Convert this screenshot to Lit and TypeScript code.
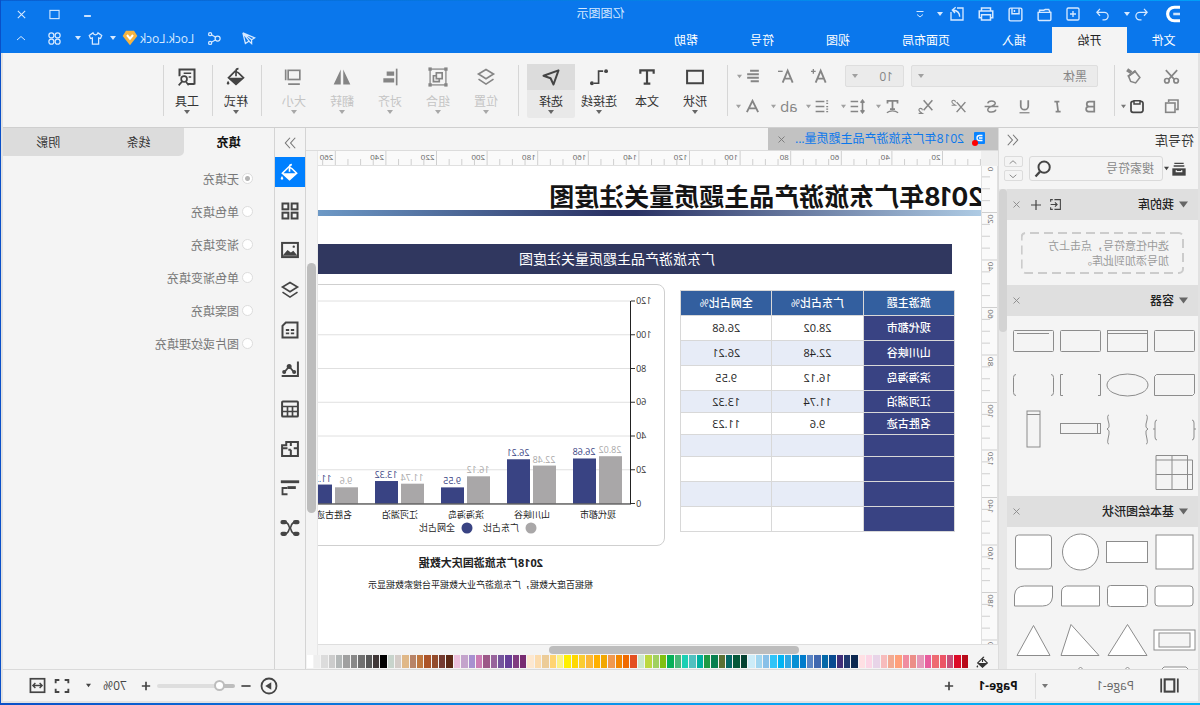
import { LitElement, html, svg, css, nothing } from "lit";
import { customElement, property, state } from "lit/decorators.js";
import { classMap } from "lit/directives/class-map.js";

/* Line icons on a 24-unit grid; drawn with currentColor. */
const ICONS: Record<string, unknown> = {
  logo: svg`<path d="M4 3h7.500a8.800 8.800 0 0 1 0 18H4" stroke-width="4.200"/><path d="M4 12h9" stroke-width="3.400" opacity=".8"/>`,
  undo: svg`<path d="M8 3L3 8.500 8 14M3.500 8.500H15a6 6 0 0 1 0 12h-3"/>`,
  redo: svg`<path d="M16 3l5 5.500L16 14M20.500 8.500H9a6 6 0 0 0 0 12h3"/>`,
  addBox: svg`<rect x="3" y="3" width="18" height="18" rx="2"/><path d="M12 7.500v9M7.500 12h9"/>`,
  folder: svg`<path d="M3 19V9h18v10a1.500 1.500 0 0 1-1.500 1.500h-15A1.500 1.500 0 0 1 3 19zM4 9l2-4h5l2 1h6v3"/>`,
  save: svg`<rect x="3" y="3" width="18" height="18" rx="2"/><path d="M7 3v8h10V3M13.500 5.500v3"/>`,
  print: svg`<path d="M6 8V4h12v4M6 17H3V8h18v9h-3M6 13h12v7H6z"/>`,
  exportDoc: svg`<path d="M12 3H3v18h18V9M8 16c0-6 3-9 10-10M14 2l5 4-4 4.500"/>`,
  more: svg`<path d="M5 7h14M6 13l6 5 6-5"/>`,
  min: svg`<path d="M3 16h18" stroke-width="5"/>`,
  max: svg`<rect x="2" y="3" width="20" height="18" stroke-width="2.400"/>`,
  close: svg`<path d="M4 4l16 16M20 4L4 20" stroke-width="2.400"/>`,
  plane: svg`<path d="M21 3L2 11l5 3v6l4-3.500M21 3L7 14M21 3l-4 17-6-4z"/>`,
  share: svg`<circle cx="7" cy="12" r="4"/><circle cx="19" cy="5" r="2.500"/><circle cx="19" cy="19" r="2.500"/><path d="M10 10l7-4M10 14l7 4"/>`,
  gem: svg`<path d="M6 1h12l5 8-11 14L1 9z" fill="#f6b440" stroke="none"/><path d="M7.500 7.500L12 13l4.500-5.500" stroke="#fff" stroke-width="3"/>`,
  shirt: svg`<path d="M8 3L2 7l2 5 3-1v10h10V11l3 1 2-5-6-4c-1 4-7 4-8 0z"/>`,
  apps: svg`<circle cx="7" cy="7" r="4"/><circle cx="17" cy="7" r="4"/><circle cx="7" cy="17" r="4"/><circle cx="17" cy="17" r="4"/>`,
  up: svg`<path d="M4 16l8-7 8 7"/>`,
  down: svg`<path d="M4 9l8 7 8-7"/>`,
  cut: svg`<path d="M4 3l12 13M20 3L8 16" stroke-width="2.400"/><circle cx="5.500" cy="18" r="3.200" stroke-width="2.400"/><circle cx="18.500" cy="18" r="3.200" stroke-width="2.400"/>`,
  copy: svg`<path d="M6 17H3V3h14v3" stroke-width="2.400"/><rect x="7.500" y="7.500" width="14" height="14" stroke-width="2.400"/>`,
  brush: svg`<path d="M21 2.500l-6 4" stroke-width="5"/><path d="M10 4.500l9 7-3 7.500L9 21l-6-7.500z" stroke-width="2.200"/><path d="M9 4l11 8" stroke-width="3"/>`,
  paste: svg`<rect x="3" y="5" width="18" height="16.500" rx="3" stroke-width="2.600"/><path d="M7.500 4h9v5h-9z" fill="#f4f4f4" stroke-width="2.200"/>`,
  bold: svg`<path d="M6 4h8a4 4 0 0 1 0 8H6zM6 12h9a4 4 0 0 1 0 8H6z" stroke-width="2.800"/>`,
  italic: svg`<path d="M9 4h8M7 20h8M13 4l-2 16" stroke-width="2.800"/>`,
  underline: svg`<path d="M6 2v9a6 6 0 0 0 12 0V2" stroke-width="2.800"/><path d="M4 22h16"/>`,
  strike: svg`<path d="M18 7c-1-5-12-5-12 0 0 4 12 5 12 10 0 5-12 5-13 0M1 12h22" stroke-width="2.400"/>`,
  sup: svg`<path d="M1 5l14 16M15 5L1 21" stroke-width="2.400"/><path d="M17 5c0-4 6-4 5.500 0-.5 2-5.500 5-5.500 5h6" stroke-width="1.700"/>`,
  sub: svg`<path d="M1 2l14 16M15 2L1 18" stroke-width="2.400"/><path d="M17 18c0-4 6-4 5.500 0-.5 2-5.500 5-5.500 5h6" stroke-width="1.700"/>`,
  textCurve: svg`<path d="M4 7V3h16v4M12 3v13M8 16h8" stroke-width="2.800"/><path d="M3 22c5-4 13-4 18 0"/>`,
  lineSpace: svg`<path d="M11 4h12M11 12h12M11 20h12M4 3v18M1 6l3-4 3 4M1 18l3 4 3-4" stroke-width="2.500"/>`,
  list: svg`<path d="M9 4h14M9 12h14M9 20h14" stroke-width="2.700"/><path d="M3 3h3M3 7h3M3 12h3M3 16h3M3 20h3" stroke-width="2"/>`,
  alignLines: svg`<path d="M2 3h15M2 9h20M2 15h20M2 21h14" stroke-width="3.200"/>`,
  fontUp: svg`<path d="M2 22L9.500 4 17 22M5 16h9" stroke-width="2.800"/><path d="M17 5h7M20.500 1.500v7" stroke-width="2"/>`,
  fontDown: svg`<path d="M2 22L9.500 4 17 22M5 16h9" stroke-width="2.800"/><path d="M17 5h7" stroke-width="2"/>`,
  fontColor: svg`<path d="M3 21L12 3l9 18M6.500 15h11" stroke-width="3"/>`,
  rect: svg`<rect x="2.500" y="4.500" width="19" height="15" stroke-width="2.400"/>`,
  text: svg`<path d="M4 8V4h16v4M12 4v16M8 20h8" stroke-width="2.600"/>`,
  connector: svg`<circle cx="3.500" cy="5" r="2.300" fill="currentColor" stroke="none"/><circle cx="20.500" cy="19.500" r="2.300" fill="currentColor" stroke="none"/><path d="M7 5h5.500v14.500H18"/>`,
  select: svg`<path d="M3 4l18 6.500-8.500 3L9 21z" stroke-width="2.400" stroke-linejoin="round"/>`,
  layers: svg`<path d="M12 3l9 5.500-9 5.500-9-5.500z"/><path d="M3 14.500L12 20.500l9-6" />`,
  group: svg`<rect x="2.500" y="2.500" width="19" height="19" stroke-width="1.500"/><rect x="1.500" y="1.500" width="2" height="2"/><rect x="20.500" y="1.500" width="2" height="2"/><rect x="1.500" y="20.500" width="2" height="2"/><rect x="20.500" y="20.500" width="2" height="2"/><rect x="7" y="7" width="7" height="7"/><path d="M10.500 14v3.500h7v-7H14"/>`,
  align: svg`<path d="M4 2v20" stroke-width="2"/><path d="M7 8h9M7 16h13" stroke-width="5"/>`,
  flip: svg`<path d="M2 21L10.500 3v18zM22 21L13.500 3v18z" fill="currentColor" stroke="none"/>`,
  resize: svg`<rect x="5" y="4" width="14" height="11"/><path d="M22 3v13M5 20.500h14"/>`,
  bucket: svg`<path d="M13 5l8 8-9 8-9-8 6-6z"/><path d="M3 13h18l-9 8z" fill="currentColor" stroke="none"/><path d="M12 11V5a3 3 0 0 0-3-3"/><path d="M21.500 16.500c2.400 3.600 1.800 4.500 0 4.500s-2.400-.9 0-4.500z" fill="currentColor" stroke="none"/>`,
  tools: svg`<path d="M3 21V3h18v8M3 20.500h8" stroke-width="2.400"/><path d="M7 7.500h9M7 12h3" stroke-width="2"/><circle cx="15.500" cy="14.500" r="3.500"/><path d="M18 17.500l4 4.500M13 18l-3 4"/>`,
  dblLeft: svg`<path d="M12 3L4 12l8 9M21 3l-8 9 8 9" stroke-width="1.900"/>`,
  dblRight: svg`<path d="M12 3l8 9-8 9M3 3l8 9-8 9" stroke-width="1.900"/>`,
  library: svg`<path d="M5 3.500h14M4 7.500h16" stroke-width="2"/><path d="M2 11h20v11H2z" fill="currentColor" stroke="none"/><path d="M8 14v2h8v-2" stroke="#f4f4f4" stroke-width="2"/>`,
  search: svg`<circle cx="10.500" cy="9.500" r="7.500" stroke-width="2.600"/><path d="M16 15.500l6 6.500" stroke-width="3"/>`,
  importBox: svg`<path d="M14 3H3v18h11M21 7V3h-4M21 17v4h-4M21 12H9M13 8l-4 4 4 4"/>`,
  plus: svg`<path d="M12 2v20M2 12h20" stroke-width="2.400"/>`,
  grid4: svg`<rect x="3" y="3" width="7" height="7" stroke-width="2.400"/><rect x="14" y="3" width="7" height="7" stroke-width="2.400"/><rect x="3" y="14" width="7" height="7" stroke-width="2.400"/><rect x="14" y="14" width="7" height="7" stroke-width="2.400"/>`,
  image: svg`<rect x="2.500" y="3.500" width="19" height="17" stroke-width="2.400"/><path d="M3 19l5-6 3 2 4-3 6 7z" fill="currentColor" stroke="none"/><circle cx="7.500" cy="8" r="1.400" fill="currentColor" stroke="none"/>`,
  page: svg`<path d="M3 3h14l4 4v14H3z" stroke-width="2.400"/><path d="M7 12h4M13 12h4M7 16h4M13 16h4" stroke-width="2.200"/>`,
  trend: svg`<path d="M2.500 3v17.500H22" stroke-width="2.400"/><path d="M7 16l6-7 6 7"/><circle cx="13" cy="9" r="2" fill="currentColor"/><circle cx="19" cy="15.500" r="1.400" fill="currentColor"/><circle cx="7" cy="15.500" r="1.400" fill="currentColor"/>`,
  tableIcon: svg`<rect x="2.500" y="3" width="19" height="18" rx="1" stroke-width="2.400"/><path d="M2.500 9h19M2.500 15h19M9 9v12M15 9v12"/>`,
  floor: svg`<path d="M2.500 3.500h14v4h5v13h-19zM2.500 11h5M11 3.500v5M11 20v-7M15 11h6.500M11 13h3" stroke-width="2.400"/>`,
  gantt: svg`<path d="M1 4.500h22" stroke-width="3.400"/><path d="M5 11.500h10" stroke-width="3.400"/><path d="M15 12h6v7.500h-6" stroke-width="2.200"/>`,
  mind: svg`<path d="M5 5c7 0 5 7 7 7M5 19c7 0 5-7 7-7M19 5c-7 0-5 7-7 7M19 19c-7 0-5-7-7-7"/><path d="M3 5h3M18 5h3M3 19h3M18 19h3" stroke-width="5" stroke-linecap="round"/>`,
  pages: svg`<rect x="6.500" y="5" width="11" height="14" stroke-width="2.400"/><path d="M2.500 4v16M21.500 4v16"/>`,
  minus: svg`<path d="M1 12h22" stroke-width="4"/>`,
  plusThick: svg`<path d="M12 2v20M2 12h20" stroke-width="4"/>`,
  play: svg`<circle cx="12" cy="12" r="10" stroke-width="2.400"/><path d="M9 7l8 5-8 5z" fill="currentColor" stroke="none"/>`,
  full: svg`<path d="M2.500 8V3H8M16 3h5.500v5M21.500 16v5H16M8 21H2.500v-5" stroke-width="2.800"/>`,
  fit: svg`<rect x="2" y="2.500" width="20" height="19" stroke-width="2.400"/><path d="M6 12h12M9 8.500L5.500 12 9 15.500M15 8.500l3.500 3.500-3.500 3.500"/>`,
};

const icon = (name: string, size = 16) => html`
  <svg class="icon" width=${size} height=${size} viewBox="0 0 24 24" fill="none"
    stroke="currentColor" stroke-width="2" aria-hidden="true">${ICONS[name]}</svg>`;

const caret = (size = 6) => html`
  <svg class="caret" width=${size} height=${size} viewBox="0 0 6 6" aria-hidden="true">
    <path d="M0 1h6L3 5z" fill="currentColor"/></svg>`;

const base = css`
  * { box-sizing: border-box; }
  button, input, select { font: inherit; color: inherit; margin: 0; padding: 0; border: 0; background: none; }
  button, .row { display: flex; align-items: center; justify-content: center; }
  .icon, .caret { display: block; flex: none; }
`;

@customElement("title-bar")
class TitleBar extends LitElement {
  static styles = [base, css`
    :host { display: block; height: 53px; background: #0a77ec; color: #d6e9ff; }
    .edge { height: 1px; background: linear-gradient(90deg, #009ff8, #0a5fd0); }
    .top { display: grid; grid-template-columns: 1fr auto 1fr; align-items: center; height: 26px; }
    .quick { display: flex; align-items: center; padding-left: 17px; }
    .logo { color: #fff; margin-right: 11px; }
    .quick button { width: 29px; height: 24px; }
    .quick .small { width: 24px; }
    .quick .drop { width: 6px; }
    .gap { margin-right: 7px; }
    .more { margin-left: 2px; }
    .title { font-size: 12px; line-height: 16px; margin: 0; font-weight: 400; }
    .win { display: flex; justify-content: flex-end; padding-right: 4px; }
    .win button { width: 33px; height: 24px; }
    .menu { display: flex; justify-content: space-between; height: 26px; }
    .tabs { display: flex; }
    .tabs button { padding: 0 26px; font-size: 12px; color: #fff; }
    .tabs .file { width: 73px; padding: 0; }
    .tabs .on { width: 75px; padding: 0; background: #f4f4f4; color: #222; }
    .right { display: flex; padding-right: 3px; height: 22px; }
    .right button { width: 34px; gap: 3px; }
    .right .user { width: auto; gap: 2px; padding: 0 4px 0 3px; font-size: 12px; }
    .right .user .caret, .right .skin .caret { margin-left: 4px; }
  `];
  render() {
    return html`
      <div class="edge"></div>
      <div class="top">
        <div class="quick">
          <span class="logo">${icon("logo", 18)}</span>
          <button class="small" aria-label="撤销">${icon("undo", 15)}</button>
          <button class="drop gap" aria-label="撤销列表">${caret()}</button>
          <button aria-label="重做">${icon("redo", 15)}</button>
          <button aria-label="新建">${icon("addBox", 16)}</button>
          <button aria-label="打开">${icon("folder", 17)}</button>
          <button aria-label="保存">${icon("save", 17)}</button>
          <button aria-label="打印">${icon("print", 18)}</button>
          <button aria-label="导出">${icon("exportDoc", 16)}</button>
          <button class="drop" aria-label="导出列表">${caret()}</button>
          <button class="more" aria-label="更多">${icon("more", 12)}</button>
        </div>
        <h1 class="title">亿图图示</h1>
        <div class="win">
          <button aria-label="最小化">${icon("min", 9)}</button>
          <button aria-label="最大化">${icon("max", 11)}</button>
          <button aria-label="关闭">${icon("close", 11)}</button>
        </div>
      </div>
      <div class="menu">
        <nav class="tabs">
          <button class="file">文件</button>
          <button class="on">开始</button>
          ${["插入", "页面布局", "视图", "符号", "帮助"].map((t) => html`<button>${t}</button>`)}
        </nav>
        <div class="right">
          <button aria-label="发送">${icon("plane", 15)}</button>
          <button aria-label="分享">${icon("share", 15)}</button>
          <button class="user">Lock.Lock ${icon("gem", 16)}${caret()}</button>
          <button class="skin" aria-label="皮肤">${icon("shirt", 15)}${caret()}</button>
          <button aria-label="应用">${icon("apps", 15)}</button>
          <button aria-label="收起">${icon("up", 12)}</button>
        </div>
      </div>`;
  }
}

interface Tool { label: string; icon: string; drop?: boolean; state?: string; }

@customElement("tool-ribbon")
class ToolRibbon extends LitElement {
  static styles = [base, css`
    :host { display: flex; height: 74px; background: #f4f4f4; border-bottom: 1px solid #cfcfcf; color: #858585; font-size: 12px; }
    .sep { width: 1px; height: 51px; margin-top: 12px; background: #d6d6d6; flex: none; }
    .clip { display: grid; grid-template-columns: 40px 37px; grid-template-rows: 30px 30px; padding: 8px 0 0 6px; }
    .clip button { gap: 3px; }
    .dark { color: #444; }
    .dark .caret { color: #777; }
    .font { width: 386px; padding-top: 8px; }
    .line { display: flex; align-items: center; height: 30px; }
    .one { padding-left: 16px; }
    .two { padding-left: 7px; }
    .line button { width: 33px; height: 26px; }
    .line .combo { width: 35px; gap: 4px; justify-content: flex-end; padding-right: 2px; }
    .line .caret { color: #a0a0a0; }
    .pick { position: relative; display: flex; align-items: center; height: 22px; background: #ebebeb; border: 1px solid #dedede; border-radius: 2px; }
    .pick select { appearance: none; width: 100%; height: 20px; padding-left: 10px; }
    .pick .caret { position: absolute; right: 6px; }
    .family { width: 187px; margin-right: 7px; }
    .size { width: 59px; margin-right: 9px; }
    .set { display: flex; padding: 11px 8px 0 8px; }
    .big { flex-direction: column; justify-content: flex-start; width: 48px; height: 54px; color: #333; border-radius: 2px; }
    .pic { display: flex; align-items: center; justify-content: center; width: 100%; height: 26px; color: #444; }
    .name { line-height: 16px; margin-top: 4px; white-space: nowrap; }
    .big .caret { margin-top: -1px; color: #666; }
    .off .name { color: #c4c4c4; }
    .off .pic { color: #858585; }
    .off .caret { color: #a8a8a8; }
    .on { background: #e9e9e9; }
    .on .pic { background: #dcdcdc; }
    .tight { padding-left: 2px; padding-right: 0; }
    .tight .big { width: 46px; }
    .ab { font-size: 15px; line-height: 16px; }
  `];
  private big(t: Tool) {
    return html`<button class=${classMap({ big: true, off: t.state === "off", on: t.state === "on" })}>
      <span class="pic">${icon(t.icon, 20)}</span>
      <span class="name">${t.label}</span>
      ${t.drop === false ? nothing : caret()}
    </button>`;
  }
  render() {
    const off = "off";
    return html`
      <div class="clip">
        <button aria-label="剪切">${icon("cut", 17)}</button>
        <button aria-label="格式刷">${icon("brush", 17)}</button>
        <button aria-label="复制">${icon("copy", 16)}</button>
        <button class="dark" aria-label="粘贴">${icon("paste", 16)}${caret(5)}</button>
      </div>
      <div class="sep"></div>
      <div class="font">
        <div class="line one">
          <label class="pick family"><select aria-label="字体"><option>黑体</option></select>${caret()}</label>
          <label class="pick size"><select aria-label="字号"><option>10</option></select>${caret()}</label>
          <button aria-label="增大字号">${icon("fontUp", 16)}</button>
          <button aria-label="减小字号">${icon("fontDown", 16)}</button>
          <button class="combo" aria-label="对齐">${icon("alignLines", 14)}${caret(5)}</button>
        </div>
        <div class="line two">
          ${["bold", "italic", "underline", "strike", "sup", "sub"].map((n) => html`<button aria-label=${n}>${icon(n, 15)}</button>`)}
          ${["textCurve", "lineSpace", "list"].map((n) => html`<button class="combo" aria-label=${n}>${icon(n, 15)}${caret(5)}</button>`)}
          <button class="combo"><span class="ab">ab</span>${caret(5)}</button>
          <button class="combo" aria-label="字体颜色">${icon("fontColor", 15)}${caret(5)}</button>
        </div>
      </div>
      <div class="sep"></div>
      <div class="set">
        ${this.big({ label: "形状", icon: "rect" })}
        ${this.big({ label: "文本", icon: "text", drop: false })}
        ${this.big({ label: "连接线", icon: "connector" })}
        ${this.big({ label: "选择", icon: "select", state: "on" })}
      </div>
      <div class="sep"></div>
      <div class="set">
        ${this.big({ label: "位置", icon: "layers", state: off })}
        ${this.big({ label: "组合", icon: "group", state: off })}
        ${this.big({ label: "对齐", icon: "align", state: off })}
        ${this.big({ label: "翻转", icon: "flip", state: off })}
        ${this.big({ label: "大小", icon: "resize", state: off })}
      </div>
      <div class="sep"></div>
      <div class="set tight">${this.big({ label: "样式", icon: "bucket" })}</div>
      <div class="sep"></div>
      <div class="set tight">${this.big({ label: "工具", icon: "tools" })}</div>
      <div class="sep"></div>`;
  }
}

/* Library thumbnails, each drawn in a 47x44 cell centred on 23.5,22. */
const CONTAINERS = [
  svg`<rect x="3.500" y="11.500" width="40" height="21" rx="1"/>`,
  svg`<rect x="3.500" y="11.500" width="40" height="21"/><path d="M3.500 14.500h40"/>`,
  svg`<rect x="3.500" y="11.500" width="40" height="21" rx="1"/>`,
  svg`<rect x="3.500" y="11.500" width="40" height="21" rx="1"/><path d="M8 14.500h32"/>`,
  svg`<path d="M3.500 11.500h38l2 2v19h-38l-2-2z"/>`,
  svg`<ellipse cx="23.500" cy="22" rx="20.500" ry="11"/>`,
  svg`<path d="M6 11.500H3.500v21H6M41 11.500h2.500v21H41"/>`,
  svg`<path d="M6 11.500q-2.500 0-2.500 3v15q0 3 2.500 3M41 11.500q2.500 0 2.500 3v15q0 3-2.500 3"/>`,
  svg`<path d="M6 13q-2 0-2 3v14q0 3 2 3M4 22H2M41 13q2 0 2 3v14q0 3-2 3M43 22h2"/>`,
  svg`<path d="M5 8q-2 0-1 5l1 4q1 4-2 5 3 1 2 5l-1 5q-1 5 1 5M42 8q2 0 1 5l-1 4q-1 4 2 5-3 1-2 5l1 5q1 5-1 5"/>`,
  svg`<rect x="3.500" y="16.500" width="40" height="10"/><path d="M6.500 16.500v10"/>`,
  svg`<rect x="17" y="4" width="13" height="36"/><path d="M17 7.500h13"/>`,
  svg`<path d="M5.500 9v29.500h36.500V4.500H10.500v34M5.500 9h36.500M5.500 23.500h36.500M26 4.500v34"/>`,
];

const BASICS = [
  svg`<rect x="5" y="5" width="37" height="34"/>`,
  svg`<rect x="3.500" y="11.500" width="41" height="21"/>`,
  svg`<circle cx="23.500" cy="22" r="18"/>`,
  svg`<rect x="5.500" y="5" width="36" height="34" rx="3"/>`,
  svg`<rect x="5" y="12" width="38" height="20" rx="3"/>`,
  svg`<rect x="3.500" y="11.500" width="40" height="21" rx="3"/>`,
  svg`<path d="M4.500 12h33q5 1 5 6v14h-38z"/>`,
  svg`<path d="M4.500 12h28q9 0 10 9v11h-28q-9 0-10-9z"/>`,
  svg`<rect x="3" y="12" width="41" height="20"/><rect x="8" y="15" width="31" height="14" fill="#f4f4f4"/>`,
  svg`<path d="M23.500 6.500L43 37.500H4z"/>`,
  svg`<path d="M33 6.500l10 31H5z"/>`,
  svg`<path d="M23.500 7.500L40 37.500H7z"/>`,
  svg`<path d="M12 5h22l4 4v20H8V9z"/>`,
  svg`<path d="M23.500 5l14 14-14 14-14-14z"/>`,
  svg`<path d="M23.500 5l14 14-14 14-14-14z"/>`,
];

@customElement("symbol-library")
class SymbolLibrary extends LitElement {
  static styles = [base, css`
    :host { display: flex; flex-direction: column; min-height: 0; overflow: hidden; font-size: 12px; color: #333; background: #f4f4f4; }
    .head { display: flex; justify-content: space-between; align-items: center; height: 24px; padding: 0 7px 0 4px; font-size: 13px; line-height: 16px; }
    .head button { color: #777; }
    .find { display: flex; align-items: center; height: 37px; padding: 0 5px 4px 9px; }
    .lib { gap: 2px; width: 26px; color: #444; }
    .box { flex: 1; display: flex; align-items: center; height: 25px; min-width: 0; border: 1px solid #dadada; border-radius: 3px; padding: 0 4px 0 8px; color: #444; }
    .box input { flex: 1; min-width: 0; outline: none; }
    .box input::placeholder { color: #888; opacity: 1; }
    .steps { display: flex; flex-direction: column; gap: 3px; margin-left: 6px; }
    .steps button { width: 19px; height: 11px; border: 1px solid #dcdcdc; border-radius: 2px; color: #777; }
    .scroll { flex: 1; min-height: 0; display: grid; grid-template-columns: 1fr 8px; overflow: hidden; }
    .list { min-height: 0; overflow: hidden; }
    .track { background: #e8e8e8; }
    .thumb { height: 143px; background: #d3d3d3; border-radius: 4px; }
    .bar { display: flex; align-items: center; height: 31px; padding: 0 1px 0 10px; background: #dfdfdf; color: #222; }
    .bar h2 { flex: 1; margin: 0 0 0 5px; font-size: 12px; font-weight: 500; line-height: 16px; }
    .bar .caret { color: #666; }
    .bar button { width: 20px; height: 20px; color: #444; }
    .bar .x { color: #888; width: 18px; }
    .drop { display: flex; align-items: center; height: 65px; padding: 0 14px; }
    .hint { flex: 1; display: flex; align-items: center; position: relative; height: 42px; padding-left: 15px; font-size: 11px; line-height: 15px; color: #9a9a9a; }
    .hint p { margin: 0; }
    .hint svg { position: absolute; inset: 0; width: 100%; height: 100%; }
    .shapes { display: grid; grid-template-columns: repeat(4, 47px); grid-auto-rows: 44px; padding: 3px 0 1px 0; }
    .shapes svg { display: block; }
  `];
  private bar(name: string, own = false) {
    return html`<div class="bar">${caret(9)}<h2>${name}</h2>
      ${own ? html`<button aria-label="导入">${icon("importBox", 13)}</button><button aria-label="添加">${icon("plus", 12)}</button>` : nothing}
      <button class="x" aria-label="关闭${name}">${icon("close", 9)}</button></div>`;
  }
  private shapes(list: unknown[], fill: string) {
    return html`<div class="shapes">${list.map((s) => html`
      <svg width="47" height="44" viewBox="0 0 47 44" fill=${fill} stroke="#8c8c8c">${s}</svg>`)}</div>`;
  }
  render() {
    return html`
      <div class="head"><span>符号库</span><button aria-label="收起符号库">${icon("dblLeft", 14)}</button></div>
      <div class="find">
        <button class="lib" aria-label="符号库菜单">${icon("library", 16)}${caret(5)}</button>
        <label class="box"><input type="text" aria-label="搜索符号" placeholder="搜索符号" />${icon("search", 18)}</label>
        <div class="steps">
          <button aria-label="上一个">${icon("up", 10)}</button>
          <button aria-label="下一个">${icon("down", 10)}</button>
        </div>
      </div>
      <div class="scroll">
        <div class="list">
          ${this.bar("我的库", true)}
          <div class="drop"><div class="hint">
            <svg aria-hidden="true"><rect x="1" y="1" width="99%" height="40" rx="4" fill="none" stroke="#cccccc" stroke-width="2" stroke-dasharray="9 5"/></svg>
            <p>选中任意符号，点击上方<br />加号添加到此库。</p>
          </div></div>
          ${this.bar("容器")}
          ${this.shapes(CONTAINERS, "none")}
          ${this.bar("基本绘图形状")}
          ${this.shapes(BASICS, "#fff")}
        </div>
        <div class="track"><div class="thumb"></div></div>
      </div>`;
  }
}

const ROWS: [string, string, string][] = [
  ["现代都市", "28.02", "26.68"],
  ["山川峡谷", "22.48", "26.21"],
  ["滨海海岛", "16.12", "9.55"],
  ["江河湖泊", "11.74", "13.32"],
  ["名胜古迹", "9.6", "11.23"],
  ["", "", ""], ["", "", ""], ["", "", ""], ["", "", ""],
];

const PALETTE = (
  "b80a1a dc0a28 c8507a ec5566 ee6b72 e85d9e e598b8 ec8e88 f08ca0 ffa07a f2aa92 f7bcbc e8d4e8 fcd6e6 ffe0e4 " +
  "0c2850 20386e 402e78 084a90 0468a8 4068b0 5a84c4 007ccc 0690d4 2ea8e4 00b4f4 30c4f8 88c0e8 a0d6f0 ccecf8 " +
  "034232 04583a 046866 5a7034 088050 1f9a44 00b0a0 50c0c0 1ccfb4 48b878 06b058 80c010 a0d060 bcd840 cce8cc " +
  "e45020 f06a00 f38700 f0994f f2a800 ffb000 fcb838 fbcc30 ffd800 fff000 fbf284 ffd470 eccc98 fcdcae fde8d0 " +
  "782c72 803c80 663e98 74549c 98649c 9c5888 cc7cb4 a890d0 c4a4cc ecc0dc " +
  "5c2814 743a30 944c2c ac5428 c07840 b88468 e0b888 d4ccc8 c8d4cc " +
  "000000 403838 585858 707070 888888 a0a0a0 b4b8b8 cccccc dcdcdc eeeeee ffffff"
).split(" ");

@customElement("draw-canvas")
class DrawCanvas extends LitElement {
  static styles = [base, css`
    :host { display: grid; grid-template-columns: 17px 1fr 12px; grid-template-rows: 23px 15px 1fr 11px 14px; min-width: 0; min-height: 0; border-left: 1px solid #dcdcdc; background: #f4f4f4; }
    .docs { grid-column: 1 / -1; display: flex; border-bottom: 1px solid #dcdcdc; }
    .doc { display: flex; align-items: center; width: 230px; height: 22px; padding: 0 7px 0 12px; background: #c2c2c2; color: #0a77ec; font-size: 12px; }
    .doc a { flex: 1; margin-left: 8px; color: inherit; text-decoration: none; white-space: nowrap; overflow: hidden; line-height: 16px; }
    .doc button { width: 14px; height: 14px; color: #777; }
    .corner { background: #efefef; }
    .rulerx { background: #fafafa; overflow: hidden; border-bottom: 1px solid #e0e0e0; }
    .rulery { background: #fafafa; overflow: hidden; border-left: 1px solid #e0e0e0; border-right: 1px solid #e0e0e0; }
    .rulerx svg, .rulery svg { display: block; }
    .num { font-size: 8px; fill: #666; }
    .tick { stroke: #cfcfcf; }
    .sheet { position: relative; overflow: hidden; background: #fff; min-width: 0; min-height: 0; }
    .vbar { grid-row: 2 / 5; grid-column: 3; padding: 112px 1px 0 1px; border-left: 1px solid #e8e8e8; }
    .vthumb { height: 250px; border-radius: 5px; background: #bdbdbd; }
    .hbar { grid-column: 1 / 3; padding: 1px 231px 1px 199px; border-top: 1px solid #dedede; }
    .hthumb { height: 8px; border-radius: 4px; background: #bdbdbd; }
    .colors { grid-column: 1 / -1; display: grid; grid-template-columns: 30px 1fr; align-items: stretch; color: #333; }
    .swatches { display: flex; gap: 1px; padding-bottom: 1px; }
    .swatch { flex: 1; height: 13px; }
    .node { position: absolute; margin: 0; white-space: nowrap; }
    .heading { left: -3px; top: 14px; font-size: 25px; line-height: 34px; font-weight: 700; color: #141414; font-family: "Inter", "Noto Sans CJK SC", sans-serif; }
    .stripe { left: 0; right: 0; top: 44px; height: 6px; background: linear-gradient(90deg, #aecbe4, #2b3365 52%, #2b3365 56%, #6d99c6); }
    .banner { left: 29px; top: 78px; width: 670px; height: 30px; background: #30375f; color: #fff; font-size: 14px; line-height: 30px; text-align: center; }
    table { left: 26px; top: 124px; width: 275px; table-layout: fixed; border-collapse: collapse; font-size: 11px; line-height: 14px; color: #222; }
    tr { height: 25px; }
    .low { height: 22px; }
    th, td { padding: 0; border: 1px solid #d8d8d8; text-align: center; font-weight: 400; }
    thead th { background: #335f9f; color: #fff; font-weight: 500; }
    tbody th { background: #394383; color: #fff; font-weight: 500; }
    tbody tr:nth-child(even) td { background: #e7ecf7; }
    .chart { left: 316px; top: 118px; width: 420px; height: 262px; border: 1px solid #cfcfcf; border-radius: 8px; }
    .chart svg { display: block; }
    .axis { font-size: 9px; fill: #333; }
    .grayval { font-size: 9px; fill: #a9a7a8; }
    .blueval { font-size: 9px; fill: #394383; }
    .cat { font-size: 9px; fill: #222; }
    .cap { left: 438px; top: 389px; font-size: 11px; line-height: 16px; font-weight: 700; color: #222; }
    .note { left: 388px; top: 411px; font-size: 9px; line-height: 16px; color: #222; }
  `];
  private rulerX() {
    const step = 50.6 / 4;
    return svg`${Array.from({ length: 56 }, (_, i) => {
      const x = -12.1 + i * step;
      return svg`<line class="tick" x1=${x} x2=${x} y1=${i % 4 ? 8 : 0} y2="15"/>
        ${i % 4 || i === 0 ? nothing : svg`<text class="num" x=${x + 2} y="9">${i * 5}</text>`}`;
    })}`;
  }
  private rulerY() {
    const step = 47.5 / 4;
    return svg`${Array.from({ length: 44 }, (_, i) => {
      const y = -1 + i * step;
      const n = (i * 5).toString();
      return svg`<line class="tick" x1=${i % 4 ? 7 : 0} x2=${i % 4 ? 16 : 17} y1=${y} y2=${y}/>
        ${i % 4 ? nothing : svg`<text class="num" text-anchor="end" transform=${`translate(9 ${y + 2}) rotate(-90)`}>${n}</text>`}`;
    })}`;
  }
  private chart() {
    const y = (v: number) => 218.5 - v * 1.6875;
    return html`<svg width="418" height="260" viewBox="0 0 418 260">
      ${[0, 20, 40, 60, 80, 100, 120].map((v) => svg`
        <line x1="33" x2="418" y1=${y(v)} y2=${y(v)} stroke="#e0e0e0"/>
        <line x1="29" x2="33" y1=${y(v)} y2=${y(v)} stroke="#333"/>
        <text class="axis" x="28" y=${y(v) + 3} text-anchor="end">${v}</text>`)}
      ${ROWS.slice(0, 5).map(([name, a, b], i) => svg`
        <rect x=${42 + 66 * i} y=${y(+a)} width="23" height=${+a * 1.6875} fill="#a9a7a8"/>
        <rect x=${68 + 66 * i} y=${y(+b)} width="23" height=${+b * 1.6875} fill="#394383"/>
        <text class="grayval" x=${54 + 66 * i} y=${y(+a) - 3} text-anchor="middle">${a}</text>
        <text class="blueval" x=${80 + 66 * i} y=${y(+b) - 3} text-anchor="middle">${b}</text>
        <text class="cat" x=${66 + 66 * i} y="233" text-anchor="middle">${name}</text>`)}
      <path d="M33.500 16v203M33 219h385" stroke="#222" fill="none"/>
      <circle cx="133" cy="243" r="5.500" fill="#a9a7a8"/><text class="cat" x="145" y="246">广东占比</text>
      <circle cx="197" cy="243" r="5.500" fill="#394383"/><text class="cat" x="209" y="246">全网占比</text>
    </svg>`;
  }
  render() {
    return html`
      <div class="docs"><div class="doc">
        <svg width="14" height="14" viewBox="0 0 14 14" aria-hidden="true">
          <rect x="1" y="0" width="11" height="12" rx="1" fill="#0a84ff"/>
          <path d="M3.500 3.500h3a2.500 2.500 0 0 1 0 5h-3M3.500 6H7" stroke="#fff" fill="none" stroke-width="1.300"/>
          <circle cx="11" cy="11" r="3" fill="#f00"/></svg>
        <a href="#">2018年广东旅游产品主题质量...</a>
        <button aria-label="关闭文档">${icon("close", 9)}</button>
      </div></div>
      <div class="corner"></div>
      <div class="rulerx"><svg width="700" height="15">${this.rulerX()}</svg></div>
      <div class="vbar"><div class="vthumb"></div></div>
      <div class="rulery"><svg width="17" height="500">${this.rulerY()}</svg></div>
      <div class="sheet">
        <h2 class="node heading">2018年广东旅游产品主题质量关注度图</h2>
        <div class="node stripe"></div>
        <div class="node banner">广东旅游产品主题质量关注度图</div>
        <table class="node">
          <thead><tr><th>旅游主题</th><th>广东占比%</th><th>全网占比%</th></tr></thead>
          <tbody>${ROWS.map(([n, a, b], i) => html`
            <tr class=${i > 2 && i < 6 ? "low" : ""}><th scope="row">${n}</th><td>${a}</td><td>${b}</td></tr>`)}</tbody>
        </table>
        <div class="node chart">${this.chart()}</div>
        <p class="node cap">2018广东旅游国庆大数据</p>
        <p class="node note">根据百度大数据，广东旅游产业大数据平台搜索数据显示</p>
      </div>
      <div class="hbar"><div class="hthumb"></div></div>
      <div class="colors">
        <button aria-label="填充颜色">${icon("bucket", 13)}</button>
        <div class="swatches">${PALETTE.map((c) => html`<span class="swatch" style="background:#${c}"></span>`)}</div>
      </div>`;
  }
}

@customElement("format-panel")
class FormatPanel extends LitElement {
  @state() private choice = 0;
  static styles = [base, css`
    :host { display: grid; grid-template-columns: 32px 1fr; min-height: 0; background: #f4f4f4; font-size: 12px; color: #333; }
    .strip { border-left: 1px solid #d4d4d4; border-right: 1px solid #d4d4d4; color: #444; }
    .strip button { width: 100%; height: 30px; }
    .strip .fold { height: 29px; color: #777; }
    .strip .on { background: #0080ff; color: #fff; }
    .rest { display: flex; flex-direction: column; justify-content: space-around; height: 357px; margin-top: 4px; }
    .tabs { display: grid; grid-template-columns: 1fr 1fr 1fr; height: 28px; background: #f4f4f4; }
    .tabs button { background: #dcdcdc; }
    .tabs .on { background: #f4f4f4; font-weight: 700; color: #111; }
    .tabs .next { border-bottom-left-radius: 5px; }
    .opts { border: 0; margin: 0; padding: 6px 0 0 21px; }
    .opt { display: flex; align-items: center; gap: 3px; height: 33px; color: #777; }
    .opt input { appearance: none; width: 11px; height: 11px; border: 1px solid #dcdcdc; border-radius: 50%; background: #fff; }
    .opt input:checked { background: radial-gradient(circle, #b4b4b4 0 2px, #fff 3px); }
  `];
  render() {
    const side = ["grid4", "image", "layers", "page", "trend", "tableIcon", "floor", "gantt", "mind"];
    const opts = ["无填充", "单色填充", "渐变填充", "单色渐变填充", "图案填充", "图片或纹理填充"];
    return html`
      <nav class="strip">
        <button class="fold" aria-label="收起面板">${icon("dblRight", 14)}</button>
        <button class="on" aria-label="填充">${icon("bucket", 19)}</button>
        <div class="rest">${side.map((n) => html`<button aria-label=${n}>${icon(n, 20)}</button>`)}</div>
      </nav>
      <div>
        <div class="tabs"><button class="on">填充</button><button class="next">线条</button><button>阴影</button></div>
        <fieldset class="opts" aria-label="填充方式">
          ${opts.map((o, i) => html`<label class="opt">
            <input type="radio" name="fill" .checked=${this.choice === i} @change=${() => (this.choice = i)} />${o}</label>`)}
        </fieldset>
      </div>`;
  }
}

@customElement("status-bar")
class StatusBar extends LitElement {
  @property({ type: Number }) zoom = 70;
  static styles = [base, css`
    :host { display: flex; justify-content: space-between; height: 31px; border-top: 1px solid #dadada; background: #f4f4f4; font-size: 12px; color: #444; }
    .side { display: flex; align-items: center; }
    .view { width: 56px; }
    .page { width: 54px; color: #666; }
    .menu { width: 52px; justify-content: flex-end; padding-right: 6px; color: #777; }
    .line { width: 1px; height: 26px; background: #dedede; }
    .cur { width: 74px; font-weight: 700; color: #111; }
    .add { width: 24px; }
    .right { padding-right: 23px; }
    .play { width: 24px; }
    .step { width: 22px; height: 20px; }
    input { appearance: none; width: 78px; height: 14px; }
    input::-webkit-slider-runnable-track { height: 4px; border-radius: 2px; background: linear-gradient(90deg, #bdbdbd 20%, #dedede 20%); }
    input::-webkit-slider-thumb { appearance: none; width: 11px; height: 11px; margin-top: -4px; border: 2px solid #bdbdbd; border-radius: 50%; background: #fff; }
    .pct { width: 57px; gap: 12px; margin-right: 4px; }
    .fit { width: 24px; height: 24px; }
  `];
  render() {
    return html`
      <div class="side">
        <button class="view" aria-label="页面视图">${icon("pages", 21)}</button>
        <button class="page">Page-1</button>
        <button class="menu" aria-label="页面列表">${caret()}</button>
        <div class="line"></div>
        <button class="cur">Page-1</button>
        <button class="add" aria-label="新建页面">${icon("plusThick", 10)}</button>
      </div>
      <div class="side right">
        <button class="play" aria-label="播放">${icon("play", 18)}</button>
        <button class="step" aria-label="缩小">${icon("minus", 10)}</button>
        <input type="range" aria-label="缩放" min="10" max="400" .value=${String(this.zoom)} />
        <button class="step" aria-label="放大">${icon("plusThick", 10)}</button>
        <button class="pct">${this.zoom}%${caret(5)}</button>
        <button class="fit" aria-label="全屏">${icon("full", 16)}</button>
        <button class="fit" aria-label="适合宽度">${icon("fit", 17)}</button>
      </div>`;
  }
}

@customElement("app-root")
class AppRoot extends LitElement {
  static styles = css`
    :host { display: block; height: 100vh; overflow: hidden; font-family: "Open Sans", "Noto Sans CJK SC", sans-serif; }
    /* The whole window is drawn left-right reversed. */
    .window { display: flex; flex-direction: column; height: 100%; box-sizing: border-box; transform: scaleX(-1); border-right: 1px solid #0a50c8; background: #e2e2e2; }
    .inner { flex: 1; min-height: 0; display: flex; flex-direction: column; margin: 0 2px 2px 2px; }
    .work { flex: 1; min-height: 0; display: grid; grid-template-columns: 199px 1fr 303px; grid-template-rows: minmax(0, 1fr); }
    .edge { height: 2px; background: linear-gradient(90deg, #00b4f8, #0a9ff0 40%, #0a50c8); }
  `;
  render() {
    return html`
      <div class="window">
        <title-bar></title-bar>
        <div class="inner">
          <tool-ribbon></tool-ribbon>
          <div class="work">
            <symbol-library></symbol-library>
            <draw-canvas></draw-canvas>
            <format-panel></format-panel>
          </div>
          <status-bar></status-bar>
        </div>
        <div class="edge"></div>
      </div>`;
  }
}
